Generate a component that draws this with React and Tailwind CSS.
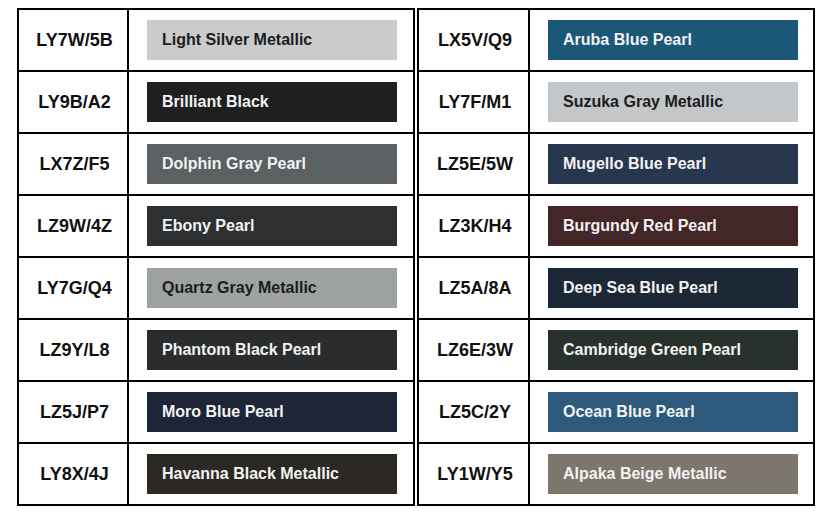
const left = [
  ["LY7W/5B", "Light Silver Metallic", "bg-[#c9cbcc]", "text-[#1c1c1c]"],
  ["LY9B/A2", "Brilliant Black", "bg-[#1f1f1f]", "text-[#f2f2f2]"],
  ["LX7Z/F5", "Dolphin Gray Pearl", "bg-[#5b6063]", "text-[#f2f2f2]"],
  ["LZ9W/4Z", "Ebony Pearl", "bg-[#2e2f31]", "text-[#f2f2f2]"],
  ["LY7G/Q4", "Quartz Gray Metallic", "bg-[#9ea2a1]", "text-[#1c1c1c]"],
  ["LZ9Y/L8", "Phantom Black Pearl", "bg-[#2b2c2e]", "text-[#f2f2f2]"],
  ["LZ5J/P7", "Moro Blue Pearl", "bg-[#1d2536]", "text-[#f2f2f2]"],
  ["LY8X/4J", "Havanna Black Metallic", "bg-[#2c2925]", "text-[#f2f2f2]"],
];

const right = [
  ["LX5V/Q9", "Aruba Blue Pearl", "bg-[#1b5877]", "text-[#f2f2f2]"],
  ["LY7F/M1", "Suzuka Gray Metallic", "bg-[#c4c7c9]", "text-[#1c1c1c]"],
  ["LZ5E/5W", "Mugello Blue Pearl", "bg-[#28374e]", "text-[#f2f2f2]"],
  ["LZ3K/H4", "Burgundy Red Pearl", "bg-[#432628]", "text-[#f2f2f2]"],
  ["LZ5A/8A", "Deep Sea Blue Pearl", "bg-[#1c2835]", "text-[#f2f2f2]"],
  ["LZ6E/3W", "Cambridge Green Pearl", "bg-[#29312d]", "text-[#f2f2f2]"],
  ["LZ5C/2Y", "Ocean Blue Pearl", "bg-[#2d5a7c]", "text-[#f2f2f2]"],
  ["LY1W/Y5", "Alpaka Beige Metallic", "bg-[#7c766c]", "text-[#f2f2f2]"],
];

function Table({ rows, codeW }) {
  return (
    <div className="w-[398px] border-2 border-black flex flex-col">
      {rows.map(([code, name, bg, fg], i) => (
        <div
          key={code}
          className={i > 0 ? "flex h-[62px] border-t-2 border-black" : "flex h-[60px]"}
        >
          <div
            className={`${codeW} shrink-0 border-r-2 border-black flex items-center justify-center pl-[3px] text-[18px] font-bold text-[#111]`}
          >
            {code}
          </div>
          <div className="flex-1 flex items-center pl-[18px]">
            <div
              className={`w-[250px] h-[40px] ${bg} ${fg} flex items-center pl-[15px] text-[16px] font-bold`}
            >
              {name}
            </div>
          </div>
        </div>
      ))}
    </div>
  );
}

export default function App() {
  return (
    <div
      className="w-[832px] h-[518px] bg-white flex items-start gap-[2px] pl-[17px] pt-[8px]"
      style={{ fontFamily: '"Liberation Sans", Arial, sans-serif' }}
    >
      <Table rows={left} codeW="w-[110px]" />
      <Table rows={right} codeW="w-[111px]" />
    </div>
  );
}
